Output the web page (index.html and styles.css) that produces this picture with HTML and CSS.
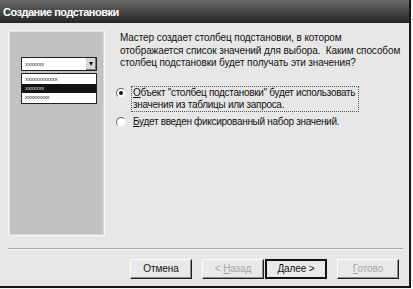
FILE: index.html
```html
<!DOCTYPE html>
<html>
  <head>
    <link rel="stylesheet" href="styles.css">
  </head>
  <body>
    <div class="window">
      <div class="titlebar">Создание подстановки</div>
      <div class="main">
        <div class="preview">
          <div class="combo">
            <span class="combo-text">xxxxxxx</span>
            <span class="combo-btn">&#9662;</span>
          </div>
          <div class="combo-list">
            <div class="combo-item">xxxxxxxxxxxx</div>
            <div class="combo-item selected">xxxxxxx</div>
            <div class="combo-item">xxxxxxxxx</div>
          </div>
        </div>
        <div class="content">
          <p class="intro">
            Мастер создает столбец подстановки, в котором<br>
            отображается список значений для выбора.&nbsp; Каким способом<br>
            столбец подстановки будет получать эти значения?
          </p>
          <div class="option focused">
            <span class="radio checked"></span>
            <span class="option-label"><u>О</u>бъект "столбец подстановки" будет использовать<br>значения из таблицы или запроса.</span>
          </div>
          <div class="option">
            <span class="radio"></span>
            <span class="option-label"><u>Б</u>удет введен фиксированный набор значений.</span>
          </div>
        </div>
      </div>
      <div class="separator"></div>
      <div class="buttons">
        <div class="btn">Отмена</div>
        <div class="btn-group">
          <div class="btn disabled">&lt; <u>Н</u>азад</div>
          <div class="btn default"><u>Д</u>алее &gt;</div>
        </div>
        <div class="btn disabled"><u>Г</u>отово</div>
      </div>
    </div>
  </body>
</html>
```

FILE: styles.css
```css
* {
  box-sizing: border-box;
}
body {
  margin: 0;
  background-color: #f2f2f2;
  font-family: "Liberation Sans", Arial, sans-serif;
  font-size: 10px;
  letter-spacing: -0.1px;
  color: #111;
}
.window {
  width: 411px;
  height: 288px;
  background-color: #e7e7e7;
  border-right: 2px solid #151515;
  border-bottom: 2px solid #151515;
  display: flex;
  flex-direction: column;
}
.titlebar {
  height: 23px;
  padding: 3px 0 0 3px;
  background: linear-gradient(#6a6a6a, #4a4a4a 45%, #252525);
  color: #fff;
  font-weight: bold;
  font-size: 11px;
  letter-spacing: -0.5px;
  line-height: 18px;
}
.main {
  display: flex;
  padding: 7px 0 0 8px;
  height: 217px;
}
.preview {
  flex-shrink: 0;
  width: 97px;
  height: 206px;
  background-color: #c2c2c2;
  border: 1px solid #f7f7f7;
  box-shadow: inset 1px 1px 0 #dedede, inset -1px -1px 0 #d8d8d8;
  padding: 26px 0 0 12px;
}
.combo {
  width: 76px;
  height: 14px;
  background-color: #fff;
  border: 1px solid #202020;
  display: flex;
  align-items: center;
  justify-content: space-between;
  padding-left: 3px;
}
.combo-text,
.combo-item {
  font-size: 6px;
  letter-spacing: -0.3px;
  color: #333;
}
.combo-btn {
  width: 11px;
  height: 12px;
  background-color: #d8d8d8;
  border-left: 1px solid #fff;
  box-shadow: inset -1px -1px 0 #777;
  font-size: 8px;
  line-height: 12px;
  text-align: center;
}
.combo-list {
  width: 76px;
  margin-top: 2px;
  background-color: #fff;
  border: 1px solid #202020;
  padding: 1px 0;
}
.combo-item {
  height: 9px;
  line-height: 9px;
  padding-left: 3px;
}
.combo-item.selected {
  background-color: #111;
  color: #ddd;
}
.content {
  flex: 1;
  margin-left: 15px;
  padding-top: 2px;
  white-space: nowrap;
}
.intro {
  margin: 0 0 16px;
  line-height: 12.5px;
}
.option {
  display: flex;
  align-items: flex-start;
  margin: 0 0 3px -4px;
}
.radio {
  flex-shrink: 0;
  width: 10px;
  height: 10px;
  margin: 2px 5px 0 0;
  border-radius: 50%;
  background-color: #fff;
  border: 1px solid;
  border-color: #666 #eee #eee #666;
  display: flex;
  align-items: center;
  justify-content: center;
}
.radio.checked::after {
  content: "";
  width: 4px;
  height: 4px;
  border-radius: 50%;
  background-color: #111;
}
.option-label {
  line-height: 12px;
  padding: 0 1px;
  border: 1px solid transparent;
  letter-spacing: -0.3px;
}
.focused .option-label {
  border: 1px dotted #555;
  width: 228px;
}
.separator {
  margin: 8px 6px 0 8px;
  border-top: 1px solid #a9a9a9;
  border-bottom: 1px solid #fafafa;
}
.buttons {
  display: flex;
  justify-content: flex-end;
  gap: 10px;
  padding: 9px 10px 0 0;
}
.btn-group {
  display: flex;
  gap: 1px;
}
.btn {
  width: 62px;
  height: 20px;
  background-color: #e9e9e9;
  border: 1px solid;
  border-color: #fdfdfd #202020 #202020 #fdfdfd;
  box-shadow: inset -1px -1px 0 #8a8a8a;
  text-align: center;
  line-height: 17px;
}
.btn.disabled {
  color: #a6a6a6;
}
.btn.default {
  border: 2px solid #111;
  box-shadow: none;
  line-height: 16px;
}
```
